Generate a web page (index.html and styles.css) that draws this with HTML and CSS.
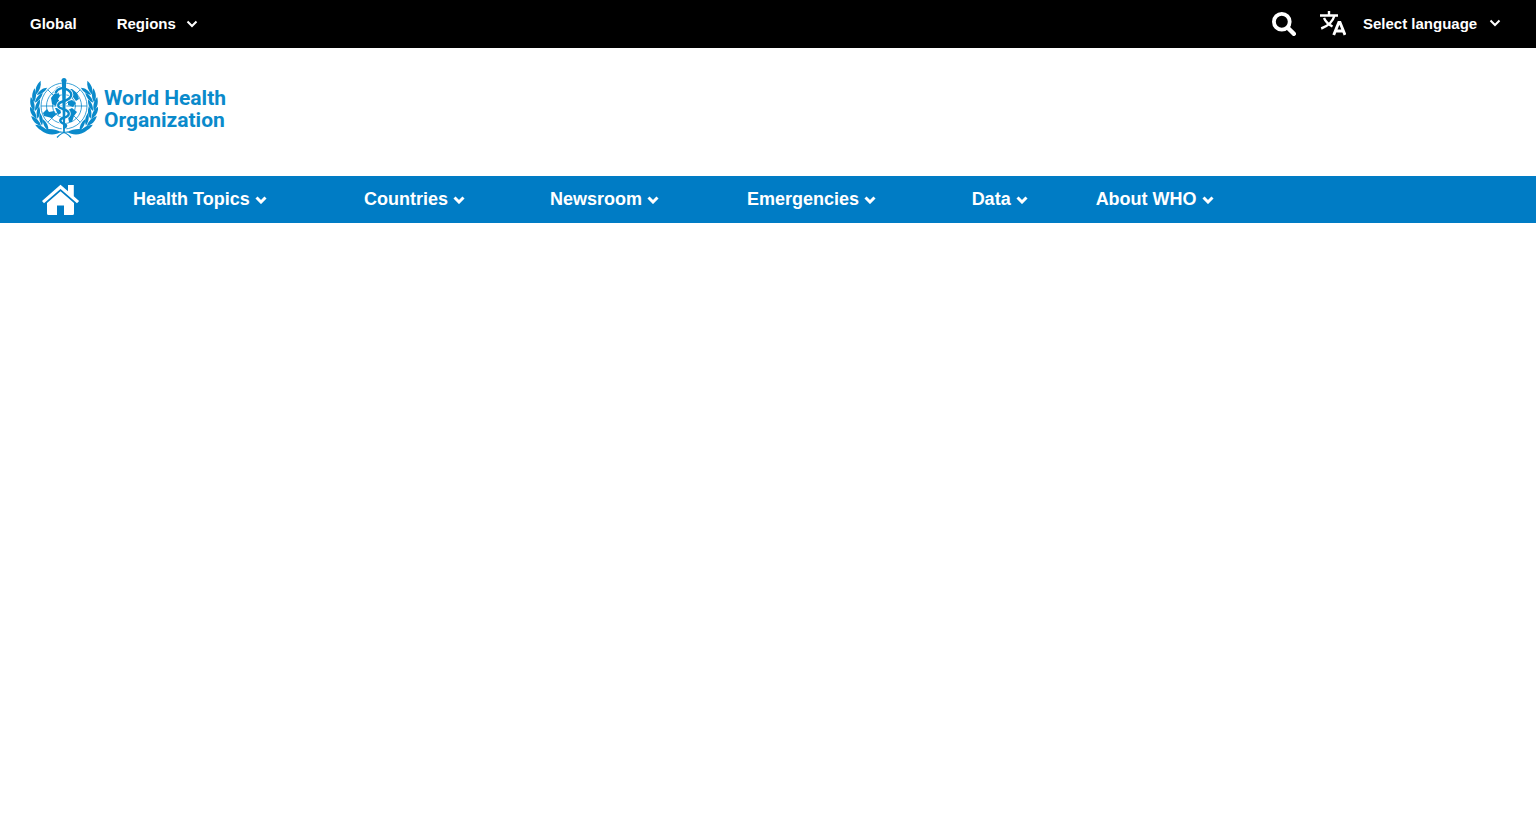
FILE: index.html
```html
<!DOCTYPE html>
<html lang="en">
<head>
    <meta charset="UTF-8">
    <meta name="viewport" content="width=device-width, initial-scale=1.0">
    <title>World Health Organization</title>
    <link rel="stylesheet" href="styles.css">
</head>
<body>
    <svg class="defs" width="0" height="0" aria-hidden="true">
        <symbol id="chevron" viewBox="0 0 12 8">
            <path d="M1.5 1.5L6 6L10.500 1.500" fill="none" stroke="currentColor"/>
        </symbol>
    </svg>

    <header>
        <div class="top-bar">
            <div class="top-left">
                <a href="#">Global</a>
                <button type="button" class="regions">Regions
                    <svg class="chevron"><use href="#chevron"/></svg>
                </button>
            </div>
            <div class="top-right">
                <button type="button" class="search-btn" aria-label="Search">
                    <svg width="24" height="24" viewBox="0 0 24 24" fill="none" stroke="currentColor">
                        <circle cx="9.800" cy="9.800" r="7.900" stroke-width="3.800"/>
                        <path d="M16 16L21.800 21.800" stroke-width="4.400" stroke-linecap="round"/>
                    </svg>
                </button>
                <label class="language">
                    <svg width="26" height="26" viewBox="0 0 26 26" fill="none" stroke="currentColor" stroke-width="2.400">
                        <path d="M0 5.500H18M9 1V5.500M14.500 5.500C13 11 8 16 1.200 18.500M4 8C6 12.500 9.500 15 12.500 16.500"/>
                        <path d="M13.700 25L18.800 12.500H20L25 25M16 21H23" stroke-width="2.900"/>
                    </svg>
                    <select aria-label="Language">
                        <option>Select language</option>
                    </select>
                    <svg class="chevron"><use href="#chevron"/></svg>
                </label>
            </div>
        </div>

        <div class="logo-bar">
            <a href="#" class="logo">
                <svg width="68" height="60" viewBox="0 0 68 60" fill="none" stroke="currentColor">
                    <defs>
                        <g id="leaves" fill="currentColor" stroke="none">
                            <path d="M4.800 35.500C.6 32.500-.8 27.500.2 22C3.800 25.500 5.500 30 4.800 35.500Z"/>
                            <path d="M5.600 35.500C4.800 30.500 6.300 26 9.600 23.500C10.200 28.500 9 32.500 5.600 35.500Z"/>
                        </g>
                        <g id="wreath">
                            <use href="#leaves" transform="rotate(37 34 28)"/>
                            <use href="#leaves" transform="rotate(21 34 28)"/>
                            <use href="#leaves" transform="rotate(5 34 28)"/>
                            <use href="#leaves" transform="rotate(-11 34 28)"/>
                            <use href="#leaves" transform="rotate(-27 34 28)"/>
                            <use href="#leaves" transform="rotate(-43 34 28)"/>
                            <path d="M11 52.500C18 50 25 51 31 54C26 57 18 58 11 52.500Z" fill="currentColor" stroke="none"/>
                            <path d="M30 54C35 54 38 56 41 59.500" stroke-width="1.200"/>
                        </g>
                    </defs>
                    <use href="#wreath"/>
                    <use href="#wreath" transform="translate(68 0) scale(-1 1)"/>
                    <!-- globe -->
                    <g stroke-width=".8">
                        <circle cx="34" cy="28" r="23"/>
                        <circle cx="34" cy="28" r="17.500"/>
                        <circle cx="34" cy="28" r="11.500"/>
                        <path d="M11 28H57M17.700 11.700L50.300 44.300M50.300 11.700L17.700 44.300"/>
                    </g>
                    <g fill="currentColor" stroke="none">
                        <path d="M13 35L17 31L19 34L24 33L26 37L22 40L18 39L14 38Z"/>
                        <path d="M21 20L24 16L28 14L30 18L28 21L30 25L26 28L22 26Z"/>
                        <path d="M24 13L27 9L31 8L29 12Z"/>
                        <path d="M38 11L42 11L47 15L49 21L46 23L43 19L40 20L41 15Z"/>
                        <path d="M38 23L42 22L46 25L43 29L38 27Z"/>
                        <path d="M38 32L42 30L47 34L44 38L42 44L39 44L38 39Z"/>
                        <path d="M25 30L30 30L31 35L28 37Z"/>
                    </g>
                    <!-- staff and serpent -->
                    <path d="M34 2V52" stroke="#fff" stroke-width="4.600"/>
                    <path d="M25.500 15C28 9.500 33 9 38 12C44 16 41 21 34 23C27 25 26 29 33 31C41 33.500 40 38 34 39.500C29 41 29 44 34 46" stroke="#fff" stroke-width="4"/>
                    <path d="M31.800 2H36.200L34.800 55H33.200Z" fill="currentColor" stroke="none"/>
                    <circle cx="34" cy="2.500" r="2.500" fill="currentColor" stroke="none"/>
                    <path d="M25.500 15C28 9.500 33 9 38 12C44 16 41 21 34 23C27 25 26 29 33 31C41 33.500 40 38 34 39.500C29 41 29 44 34 46C37 47 36.500 49 34 50" stroke-width="2.400"/>
                </svg>
                <span class="logo-text">World Health<br>Organization</span>
            </a>
        </div>

        <nav class="main-nav">
            <a href="#" class="home" aria-label="Home">
                <svg width="38" height="32" viewBox="0 0 38 32" fill="currentColor">
                    <path d="M18.500 .8L26 7.300V1H31.800V12.300L37.100 17L35 19.300L18.500 5L2 19.300L0 17Z"/>
                    <path d="M18.500 7.300L32 19V29.500Q32 31 30.500 31H22V21.500H15V31H6.500Q5 31 5 29.500V19Z"/>
                </svg>
            </a>
            <ul class="menu">
                <li><button type="button">Health Topics<svg class="chevron"><use href="#chevron"/></svg></button></li>
                <li><button type="button">Countries<svg class="chevron"><use href="#chevron"/></svg></button></li>
                <li><button type="button">Newsroom<svg class="chevron"><use href="#chevron"/></svg></button></li>
                <li><button type="button">Emergencies<svg class="chevron"><use href="#chevron"/></svg></button></li>
                <li><button type="button">Data<svg class="chevron"><use href="#chevron"/></svg></button></li>
                <li><button type="button">About WHO<svg class="chevron"><use href="#chevron"/></svg></button></li>
            </ul>
        </nav>
    </header>
</body>
</html>
```

FILE: styles.css
```css
body {
    margin: 0;
    background-color: #fff;
    font-family: "Liberation Sans", Arial, sans-serif;
}
a {
    color: inherit;
    text-decoration: none;
}
button, select {
    margin: 0;
    padding: 0;
    border: none;
    background: none;
    color: inherit;
    font: inherit;
    cursor: pointer;
}
svg {
    display: block;
    flex: none;
}
.defs {
    position: absolute;
}
.chevron {
    width: 12px;
    height: 8px;
    stroke-width: 2px;
}

/* top bar */
.top-bar {
    display: flex;
    justify-content: space-between;
    align-items: center;
    height: 46px;
    padding: 0 35px 2px 30px;
    background-color: #000;
    color: #fff;
    font-size: 15px;
    font-weight: bold;
}
.top-left {
    display: flex;
    align-items: center;
    gap: 40px;
}
.regions {
    display: flex;
    align-items: center;
    gap: 10px;
}
.regions .chevron {
    margin-top: 2px;
}
.top-right {
    display: flex;
    align-items: center;
    gap: 24px;
}
.search-btn {
    padding-top: 2px;
}
.language {
    display: flex;
    align-items: center;
    gap: 11px;
}
.language select {
    appearance: none;
    margin-left: 6px;
}
.language option {
    color: #000;
}

/* logo */
.logo-bar {
    display: flex;
    padding: 30px 30px 38px;
}
.logo {
    display: flex;
    align-items: center;
    gap: 6px;
    color: #0a8acb;
}
.logo-text {
    padding-top: 2px;
    font-family: Roboto, "Liberation Sans", sans-serif;
    font-size: 21px;
    font-weight: bold;
    line-height: 22px;
}

/* main navigation */
.main-nav {
    display: flex;
    align-items: center;
    height: 47px;
    padding: 0 42px;
    background-color: #007cc5;
    color: #fff;
    font-size: 18px;
    font-weight: bold;
}
.home {
    margin-right: 53px;
}
.menu {
    display: table;
    width: 100%;
    max-width: 1172px;
    margin: 0;
    padding: 0;
    list-style: none;
}
.menu li {
    display: table-cell;
    padding-right: 34px;
}
.menu button {
    display: flex;
    align-items: center;
    gap: 5px;
    white-space: nowrap;
}
.menu .chevron {
    stroke-width: 3px;
}
```
